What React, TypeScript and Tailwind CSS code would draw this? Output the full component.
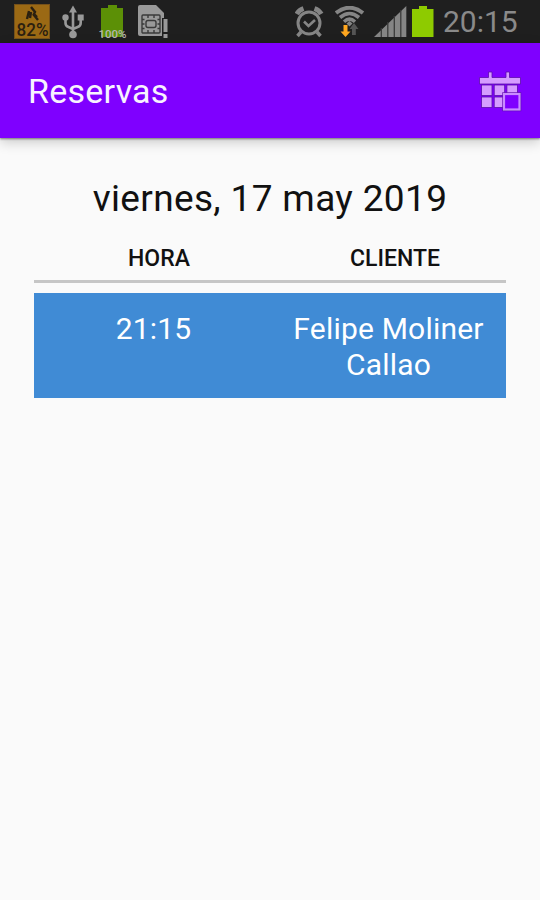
import React from 'react';

const reservas = [{ id: 1, hora: '21:15', cliente: 'Felipe Moliner Callao' }];

const BurnIcon = () => (
  <svg width="36" height="36" viewBox="0 0 36 36">
    <rect x="0.5" y="0.5" width="35" height="34" fill="#9b6914" stroke="#76511a" />
    <path d="M17 3l4 5-1 2 3 3M15 7l-2 8M17 8l-1 6M19 10l5 6" fill="none" stroke="#2b2010" strokeWidth="2.4" />
    <text x="18.5" y="32" textAnchor="middle" fontSize="18" fontWeight="500" textLength="32" lengthAdjust="spacingAndGlyphs" fill="#2b2010">82%</text>
  </svg>
);

const UsbIcon = () => (
  <svg width="22" height="34" viewBox="0 0 22 34" fill="#999" stroke="#999">
    <path d="M11 5v24M3.5 14v4q0 3 3 4l4.5 2M18.7 13v5q0 3-3 4l-4.7 2" fill="none" strokeWidth="2.6" />
    <path d="M11 0.5l4 7H7z" stroke="none" />
    <circle cx="3.5" cy="12.5" r="3.2" stroke="none" />
    <rect x="15.7" y="9.5" width="6" height="6" stroke="none" />
    <circle cx="11" cy="29.5" r="3.8" stroke="none" />
  </svg>
);

const ChargeIcon = () => (
  <svg width="30" height="36" viewBox="0 0 30 36" className="overflow-visible">
    <path d="M10 1h9v3h6v29H3V4h7z" fill="#5c9006" />
    <text x="14.5" y="34" textAnchor="middle" fontSize="11" fontWeight="500" textLength="28" lengthAdjust="spacingAndGlyphs" fill="#b4b5b0">100%</text>
  </svg>
);

const SimIcon = () => (
  <svg width="31" height="34" viewBox="0 0 31 34">
    <path d="M2 0h16l8 8v23H2q-2 0-2-2V2q0-2 2-2z" fill="#999" />
    <g fill="none" stroke="#3a3a3a" strokeWidth="1.4">
      <rect x="4" y="10" width="18" height="18" rx="1" />
      <rect x="8" y="15.5" width="10" height="7" rx="2" />
      <path d="M4 14.5h2.5M4 19h2.5M4 23.5h2.5M19.5 14.5h2.5M19.5 19h2.5M19.5 23.5h2.5M10 10v3M16 10v3M10 25v3M16 25v3" />
    </g>
    <path d="M24 13h7v21h-7z" fill="#1f1f1f" />
    <path d="M25.5 14h4v13h-4zM25.5 29h4v4h-4z" fill="#999" />
  </svg>
);

const AlarmIcon = () => (
  <svg width="30" height="32" viewBox="0 0 30 32" fill="none" stroke="#858585">
    <circle cx="14" cy="17" r="11" strokeWidth="3" />
    <path d="M9 15.5l4.5 4.5 6.5-6" strokeWidth="2.6" />
    <path d="M1.8 8Q4 4 8.5 2.5M26.2 8Q24 4 19.5 2.5" strokeWidth="5" />
    <path d="M6 26l-3.5 4M22 26l3.5 4" strokeWidth="3.5" />
  </svg>
);

const WifiIcon = () => (
  <svg width="31" height="32" viewBox="0 0 31 32" fill="none" stroke="#858585">
    <path d="M1 7Q14.5-3.5 28 7" strokeWidth="4" />
    <path d="M5 11.5Q14.5 3.5 24 11.5" strokeWidth="3.6" />
    <path d="M9 15.7Q14.5 10.5 20 15.7" strokeWidth="3.4" />
    <path d="M14.5 15l3 2.5-3 3-3-3z" fill="#858585" stroke="none" />
    <path d="M19 17l4.5 6h-2.7v6H17v-6h-2.5z" fill="#555" stroke="none" />
    <path d="M8.5 19h4v6.5h3L10.5 31l-5-5.5h3z" fill="#ffa61f" stroke="none" />
  </svg>
);

const SignalIcon = () => (
  <svg width="33" height="32" viewBox="0 0 33 32">
    <path d="M0 31L32.3 0v31z" fill="#858585" />
    <path d="M7.3 22v9M13.8 16v15M20.3 10v21M26.8 4v27" stroke="#3a3a3a" strokeWidth="1.3" />
  </svg>
);

const BatteryIcon = () => (
  <svg width="22" height="32" viewBox="0 0 22 32">
    <path d="M7 0h8v3h6.5v28H0V3h7z" fill="#8ecb00" />
  </svg>
);

const CalendarIcon = () => (
  <svg width="44" height="42" viewBox="0 0 44 42">
    <g fill="#d59cff" stroke="#5c0dab" strokeWidth="0.8">
      <path d="M1.5 7.5h9V2H14v5.5h14V2h3.5v5.5h11V14h-41z" />
      <rect x="3.5" y="15" width="10.5" height="10.5" />
      <rect x="16.2" y="15" width="10.5" height="10.5" />
      <rect x="28.9" y="15" width="10.5" height="10.5" />
      <rect x="3.5" y="27" width="10.5" height="10.5" />
      <rect x="16.2" y="27" width="10.5" height="10.5" />
    </g>
    <rect x="26" y="24" width="15.5" height="15.5" fill="#7f00ff" stroke="#5c0dab" strokeWidth="3.4" />
    <rect x="26" y="24" width="15.5" height="15.5" fill="#7f00ff" stroke="#c98cff" strokeWidth="2.2" />
  </svg>
);

export default function App() {
  return (
    <div className="min-h-[900px] w-[540px] overflow-hidden bg-[#fafafa] font-['Roboto',sans-serif] text-black">
      {/* Status bar */}
      <div className="flex h-[43px] justify-between bg-[#1f1f1f] pl-[14px] pr-[21px]">
        <div className="flex items-start pt-1">
          <BurnIcon />
          <div className="ml-3 mt-px"><UsbIcon /></div>
          <div className="ml-[14px]"><ChargeIcon /></div>
          <div className="ml-[10px] mt-px"><SimIcon /></div>
        </div>
        <div className="flex items-start pt-[6px]">
          <AlarmIcon />
          <div className="ml-[10px]"><WifiIcon /></div>
          <div className="ml-[8px]"><SignalIcon /></div>
          <div className="ml-[5px]"><BatteryIcon /></div>
          <span className="ml-[9px] w-[76px] whitespace-nowrap text-[30px] leading-[32px] text-[#8a8a8a]">20:15</span>
        </div>
      </div>

      {/* Toolbar */}
      <header className="flex h-[95px] items-center justify-between bg-[#7f00ff] pl-7 pr-[18px] shadow-[0_1px_2px_rgba(0,0,0,0.45),0_4px_12px_rgba(0,0,0,0.2)]">
        <h1 className="text-[34px] leading-[40px] tracking-[0.25px] text-[#f8f2ff]">Reservas</h1>
        <CalendarIcon />
      </header>

      <main className="px-[34px] pt-[39px]">
        <h2 className="whitespace-nowrap text-center text-[37px] leading-[44px] tracking-[0.35px] text-[#111]">viernes, 17 may 2019</h2>
        <div className="-mr-[7px] ml-[7px] mt-6 grid grid-cols-2 text-center text-[23px] font-medium leading-[28px] text-[#111]">
          <span>HORA</span>
          <span>CLIENTE</span>
        </div>
        <div className="mt-[7px] h-[3px] bg-[#c6c6c6]" />
        {reservas.map((r) => (
          <div key={r.id} className="mt-[10px] grid h-[105px] grid-cols-2 bg-[#408bd5] pl-[2px] pt-[18px] text-center text-[30px] leading-[36px] tracking-[0.2px] text-white">
            <span>{r.hora}</span>
            <span className="px-4">{r.cliente}</span>
          </div>
        ))}
      </main>
    </div>
  );
}
